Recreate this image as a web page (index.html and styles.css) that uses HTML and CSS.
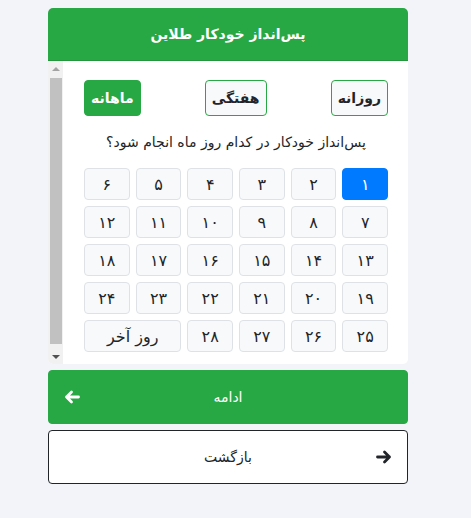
FILE: index.html
```html
<!DOCTYPE html>
<html lang="fa" dir="rtl">
<head>
<meta charset="utf-8">
<title>پس‌انداز خودکار طلاین</title>
<link rel="stylesheet" href="styles.css">
</head>
<body>
<div class="app">
  <section class="card">
    <header class="card-header">پس‌انداز خودکار طلاین</header>
    <div class="card-body">
      <div class="content">
        <div class="tabs">
          <button class="tab">روزانه</button>
          <button class="tab">هفتگی</button>
          <button class="tab active">ماهانه</button>
        </div>
        <p class="question">پس‌انداز خودکار در کدام روز ماه انجام شود؟</p>
        <div class="days">
          <button class="day selected">۱</button>
          <button class="day">۲</button>
          <button class="day">۳</button>
          <button class="day">۴</button>
          <button class="day">۵</button>
          <button class="day">۶</button>
          <button class="day">۷</button>
          <button class="day">۸</button>
          <button class="day">۹</button>
          <button class="day">۱۰</button>
          <button class="day">۱۱</button>
          <button class="day">۱۲</button>
          <button class="day">۱۳</button>
          <button class="day">۱۴</button>
          <button class="day">۱۵</button>
          <button class="day">۱۶</button>
          <button class="day">۱۷</button>
          <button class="day">۱۸</button>
          <button class="day">۱۹</button>
          <button class="day">۲۰</button>
          <button class="day">۲۱</button>
          <button class="day">۲۲</button>
          <button class="day">۲۳</button>
          <button class="day">۲۴</button>
          <button class="day">۲۵</button>
          <button class="day">۲۶</button>
          <button class="day">۲۷</button>
          <button class="day">۲۸</button>
          <button class="day last">روز آخر</button>
        </div>
      </div>
      <div class="scrollbar" aria-hidden="true">
        <span class="sb-btn"><span class="tri up"></span></span>
        <span class="sb-track"><span class="sb-thumb"></span></span>
        <span class="sb-btn"><span class="tri down"></span></span>
      </div>
    </div>
  </section>
  <button class="action primary">
    <span class="label">ادامه</span>
    <svg class="arrow" viewBox="0 0 16 14" width="16" height="14" aria-hidden="true">
      <path d="M14.5 7H2.5M7.5 2L2.5 7L7.5 12" fill="none" stroke="currentColor" stroke-width="2.8" stroke-linecap="round" stroke-linejoin="round"/>
    </svg>
  </button>
  <button class="action secondary">
    <svg class="arrow" viewBox="0 0 16 14" width="16" height="14" aria-hidden="true">
      <path d="M1.5 7H13.5M8.5 2L13.5 7L8.5 12" fill="none" stroke="currentColor" stroke-width="2.8" stroke-linecap="round" stroke-linejoin="round"/>
    </svg>
    <span class="label">بازگشت</span>
  </button>
</div>
</body>
</html>
```
FILE: styles.css
```css
* { box-sizing: border-box; }

html, body {
  margin: 0;
  background: #f3f4f9;
}

body {
  padding: 8px 15px 8px 0;
  font-family: "DejaVu Sans", "Noto Sans", sans-serif;
  color: #212529;
  font-size: 14px;
}

.app {
  width: 360px;
  margin: 0 auto;
  display: flex;
  flex-direction: column;
  gap: 6px;
}

.card {
  background: #fff;
  border-radius: 5px;
  overflow: hidden;
}

.card-header {
  height: 53px;
  background: #28a745;
  border-bottom: 1px solid #23963e;
  color: #fff;
  font-weight: bold;
  font-size: 14px;
  display: flex;
  align-items: center;
  justify-content: center;
}

.card-body {
  height: 303px;
  display: flex;
}

.content {
  flex: 1;
  overflow: hidden;
  padding: 19px 20px 20px 21px;
}

/* decorative scrollbar (left side in RTL) */
.scrollbar {
  width: 15px;
  flex: none;
  background: #f1f1f1;
  display: flex;
  flex-direction: column;
}

.sb-btn {
  height: 15px;
  flex: none;
  display: flex;
  align-items: center;
  justify-content: center;
}

.sb-track {
  flex: 1;
  padding: 2px 1px 5px 2px;
  display: flex;
}

.sb-thumb {
  flex: 1;
  background: #c1c1c1;
}

.tri {
  width: 0;
  height: 0;
  border-left: 4px solid transparent;
  border-right: 4px solid transparent;
}

.tri.up {
  border-bottom: 4px solid #a3a3a3;
}

.tri.down {
  border-top: 4px solid #505050;
}

.tabs {
  display: flex;
  justify-content: space-between;
}

button {
  font-family: inherit;
  color: inherit;
  cursor: pointer;
}

.tab {
  height: 36px;
  padding: 0 6px;
  border: 1px solid #28a745;
  border-radius: 4px;
  background: #f8f9fa;
  font-weight: bold;
  font-size: 14px;
}

.tab.active {
  background: #28a745;
  color: #fff;
}

.question {
  margin: 16px 0 15px;
  text-align: center;
  line-height: 21px;
  font-size: 14px;
}

.days {
  display: grid;
  grid-template-columns: repeat(6, 1fr);
  grid-auto-rows: 32px;
  gap: 6px;
}

.day {
  border: 1px solid #dee2e6;
  border-radius: 4px;
  background: #f8f9fa;
  font-size: 16px;
  padding: 0;
}

.day.selected {
  background: #007bff;
  border-color: #007bff;
  color: #fff;
}

.day.last {
  grid-column: span 2;
}

.action {
  height: 54px;
  border-radius: 4px;
  display: flex;
  align-items: center;
  position: relative;
  font-size: 14px;
  padding: 0 15px;
}

.action .label {
  position: absolute;
  left: 0;
  right: 0;
  text-align: center;
  pointer-events: none;
}

.action .arrow {
  display: block;
}

.primary {
  background: #28a745;
  border: 1px solid #28a745;
  color: #fff;
  justify-content: flex-end;
}

.secondary {
  background: #fff;
  border: 1px solid #212529;
  color: #212529;
  justify-content: flex-start;
}
```
